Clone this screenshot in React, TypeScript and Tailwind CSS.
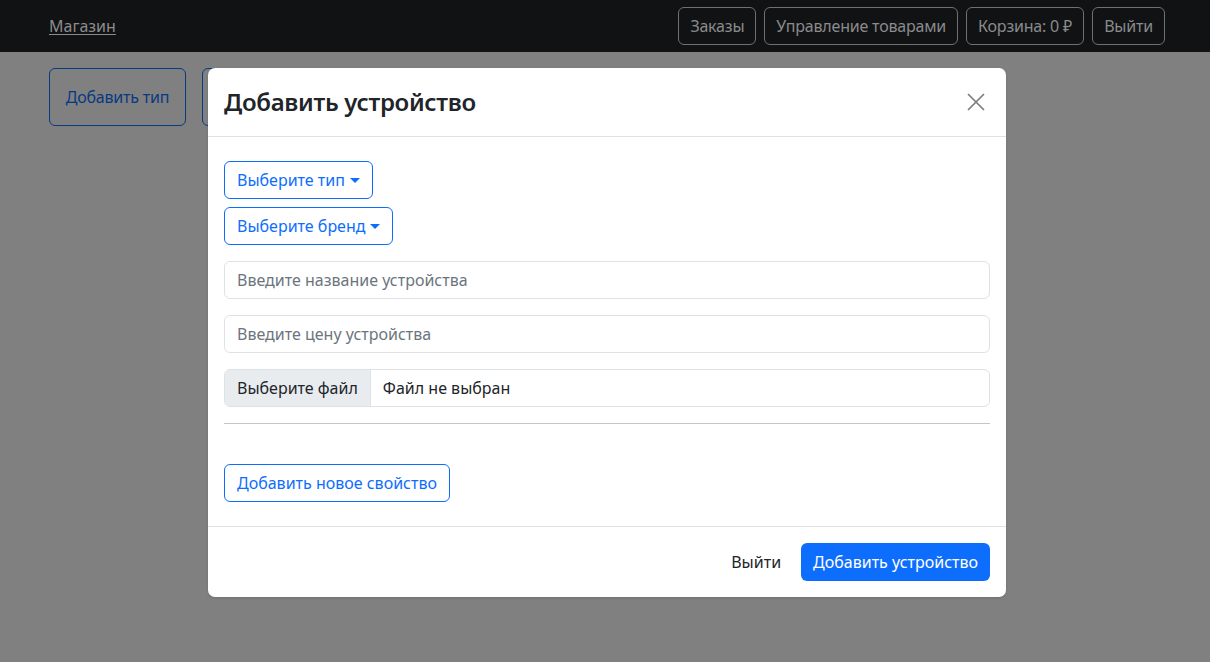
import { X } from "lucide-react"

const font = { fontFamily: '"Noto Sans", "Open Sans", sans-serif' }

function Caret() {
  return (
    <span className="ml-[5px] inline-block h-0 w-0 border-x-[5px] border-t-[5px] border-x-transparent border-t-current align-[3px]" />
  )
}

function App() {
  const navButtons = ["Заказы", "Управление товарами", "Корзина: 0 ₽", "Выйти"]

  return (
    <div className="relative h-[662px] w-full overflow-hidden bg-[#808080] text-base" style={font}>
      {/* Navbar */}
      <div className="flex h-[52px] items-center justify-between bg-[#111214] pl-[49px] pr-[45px]">
        <a href="#" className="text-[16px] text-[#8c8c8c] underline underline-offset-2">
          Магазин
        </a>
        <div className="flex items-center gap-[8px]">
          {navButtons.map((label) => (
            <button
              key={label}
              className="h-[38px] rounded-[6px] border border-[#6f7071] px-[11px] text-[16px] tracking-[-0.2px] text-[#8a8b8c]"
            >
              {label}
            </button>
          ))}
        </div>
      </div>

      {/* Page content behind backdrop */}
      <div className="flex gap-[16px] pl-[49px] pt-[16px]">
        <button className="h-[58px] w-[137px] rounded-[6px] border border-[#073a80] text-[16px] tracking-[-0.2px] text-[#073a80]">
          Добавить тип
        </button>
        <div className="h-[58px] w-[140px] rounded-[6px] border border-[#073a80]" />
      </div>

      {/* Modal */}
      <div className="absolute inset-0 pl-[208px] pt-[68px]">
        <div className="flex w-[798px] flex-col rounded-[7px] bg-white shadow-sm">
          <div className="flex h-[69px] items-center justify-between border-b border-[#dee2e6] px-[16px]">
            <h4 className="text-[24px] font-semibold leading-none tracking-[-0.3px] text-[#212529]">
              Добавить устройство
            </h4>
            <button className="mr-[-1px] text-[#7d7d7d]">
              <X size={30} strokeWidth={1.4} />
            </button>
          </div>

          <div className="flex flex-col px-[16px] pt-[24px] pb-[24px]">
            <div>
              <button className="h-[38px] rounded-[6px] border border-[#0d6efd] px-[12px] text-[16px] text-[#0d6efd]">
                Выберите тип
                <Caret />
              </button>
            </div>
            <div className="mt-[8px]">
              <button className="h-[38px] rounded-[6px] border border-[#0d6efd] px-[12px] text-[16px] text-[#0d6efd]">
                Выберите бренд
                <Caret />
              </button>
            </div>
            <input
              className="mt-[16px] h-[38px] w-full rounded-[6px] border border-[#dee2e6] px-[12px] text-[16px] text-[#212529] outline-none placeholder:text-[#6c757d]"
              placeholder="Введите название устройства"
            />
            <input
              className="mt-[16px] h-[38px] w-full rounded-[6px] border border-[#dee2e6] px-[12px] text-[16px] text-[#212529] outline-none placeholder:text-[#6c757d]"
              placeholder="Введите цену устройства"
            />
            <div className="mt-[16px] flex h-[38px] w-full overflow-hidden rounded-[6px] border border-[#dee2e6] text-[16px] text-[#212529]">
              <div className="flex items-center border-r border-[#dee2e6] bg-[#e9ecef] px-[12px]">Выберите файл</div>
              <div className="flex items-center px-[12px]">Файл не выбран</div>
            </div>
            <hr className="mt-[16px] border-t border-[#c4c4c4]" />
            <div className="mt-[40px]">
              <button className="h-[38px] rounded-[6px] border border-[#0d6efd] px-[12px] text-[16px] text-[#0d6efd]">
                Добавить новое свойство
              </button>
            </div>
          </div>

          <div className="flex h-[71px] items-center justify-end gap-[8px] border-t border-[#dee2e6] px-[16px]">
            <button className="h-[38px] rounded-[6px] px-[12px] text-[16px] text-[#212529]">Выйти</button>
            <button className="h-[38px] rounded-[6px] bg-[#0d6efd] px-[12px] text-[16px] text-white">
              Добавить устройство
            </button>
          </div>
        </div>
      </div>
    </div>
  )
}

export default App
